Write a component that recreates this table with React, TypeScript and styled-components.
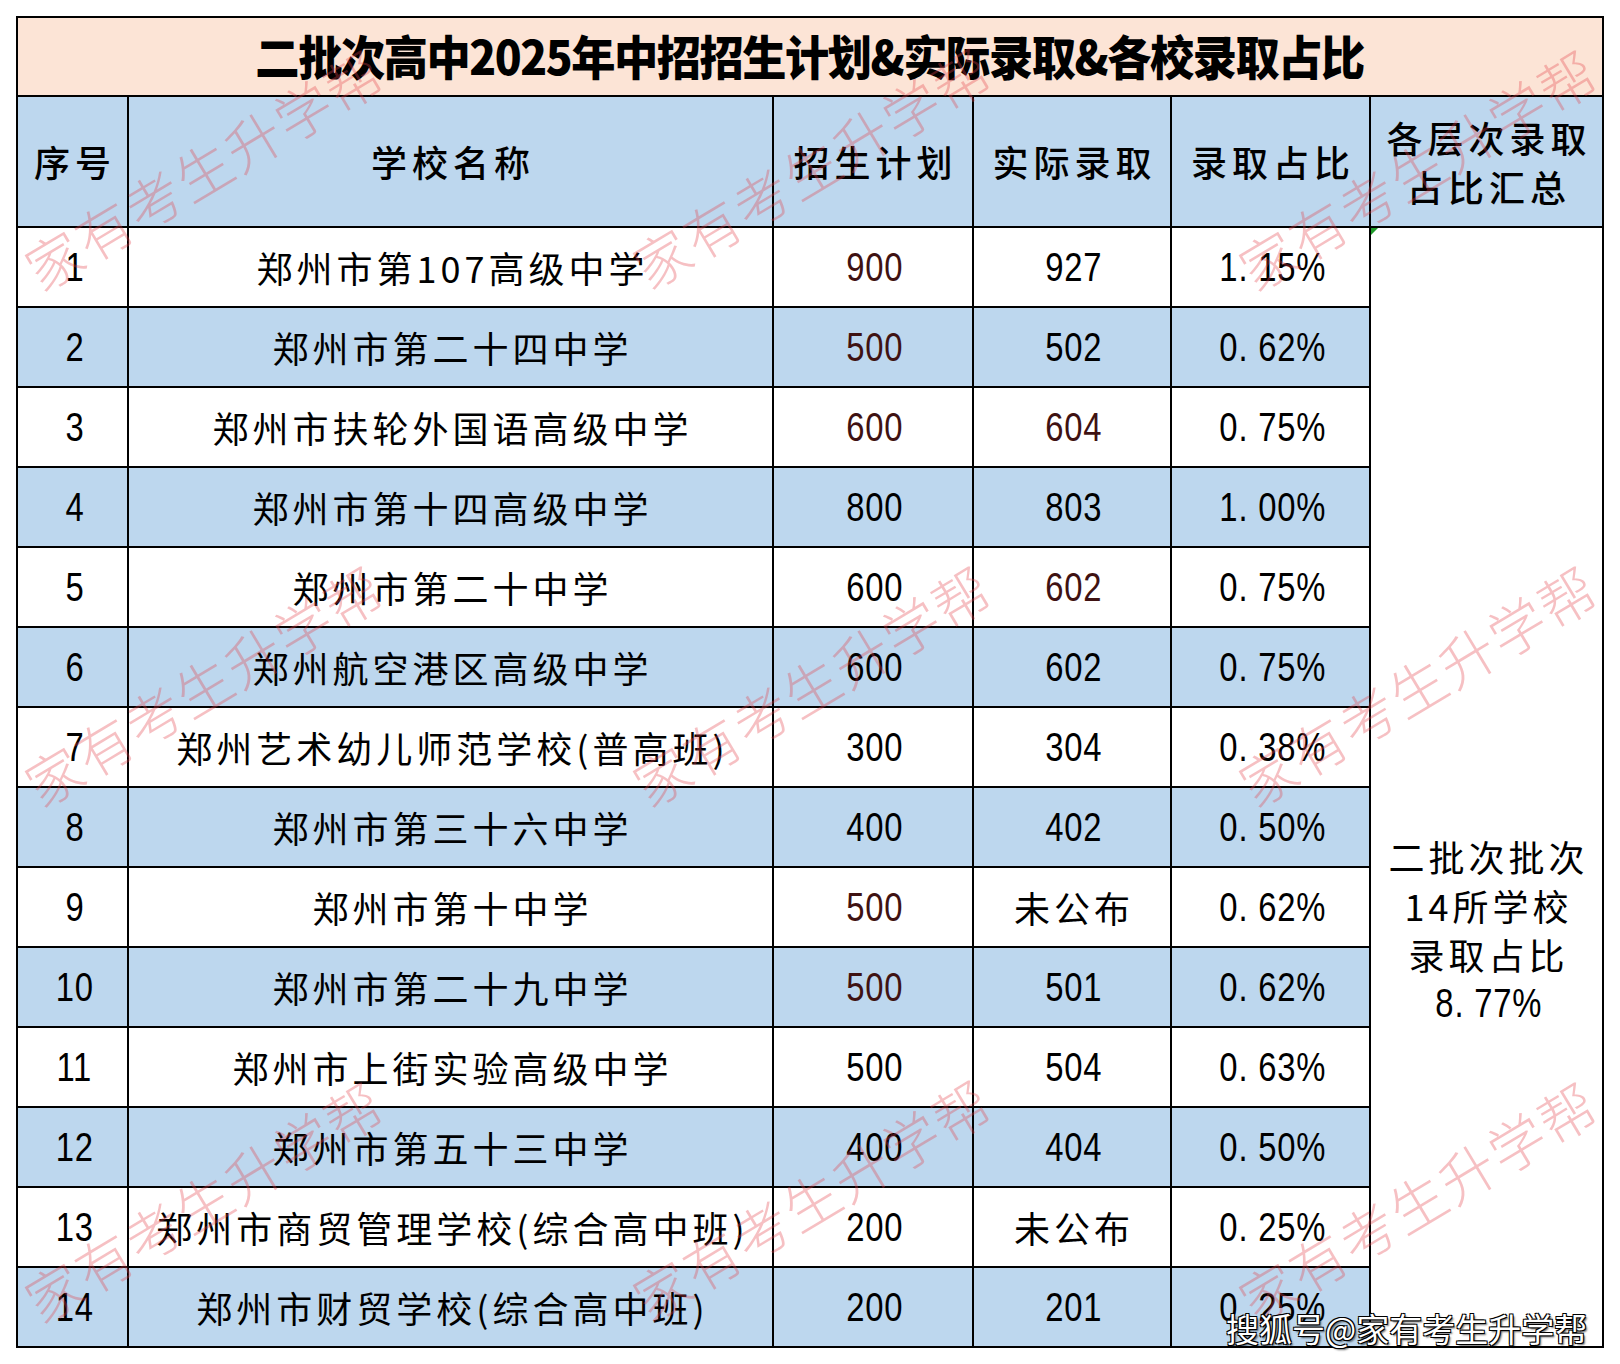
import React from "react";
import styled, { createGlobalStyle } from "styled-components";

const GlobalStyle = createGlobalStyle`
  html, body {
    margin: 0;
    padding: 0;
    background: #ffffff;
  }
  body {
    font-family: "Noto Sans CJK SC", "Noto Sans", sans-serif;
    color: #000;
  }
`;

const Page = styled.div`
  position: relative;
  width: 1620px;
  height: 1364px;
  padding: 16px 0 0 16px;
  box-sizing: border-box;
  overflow: hidden;
  background: #fff;
`;

const Sheet = styled.div`
  display: grid;
  grid-template-columns: 111px 645px 200px 198px 199px 233px;
  grid-template-rows: 79px 131px repeat(14, 80px);
  width: max-content;
  border-top: 2px solid #000;
  border-left: 2px solid #000;
`;

const CellBase = styled.div`
  box-sizing: border-box;
  border-right: 2px solid #000;
  border-bottom: 2px solid #000;
  display: flex;
  align-items: center;
  justify-content: center;
  text-align: center;
  white-space: nowrap;
`;

const TitleCell = styled(CellBase)`
  grid-column: 1 / -1;
  background: #fce4d6;
  padding-bottom: 4px;
`;

const TitleText = styled.span`
  display: inline-block;
  font-family: "Noto Sans CJK SC", sans-serif;
  font-weight: 900;
  font-size: 47px;
  letter-spacing: -1.5px;
  transform: scaleX(0.94);
`;

const HeadCell = styled(CellBase)`
  background: #bdd7ee;
  font-family: "Noto Sans CJK SC", sans-serif;
  font-weight: 500;
  font-size: 36px;
  letter-spacing: 5px;
  line-height: 49px;
  flex-direction: column;
  padding-left: 5px;
`;

const DataCell = styled(CellBase)<{ $alt: boolean; $brown?: boolean }>`
  background: ${(p) => (p.$alt ? "#bdd7ee" : "#ffffff")};
  color: ${(p) => (p.$brown ? "#3f1212" : "#000000")};
  font-family: "Noto Sans CJK SC", sans-serif;
  font-size: 36px;
  letter-spacing: 4px;
  padding-left: 4px;
`;

const Num = styled.span`
  display: inline-block;
  font-family: "Liberation Sans", "Arial", sans-serif;
  font-size: 41px;
  letter-spacing: 1px;
  transform: scaleX(0.8);
`;

const SummaryCell = styled(CellBase)`
  grid-column: 6;
  grid-row: 3 / span 14;
  background: #fff;
  position: relative;
  flex-direction: column;
  padding-top: 286px;
  font-family: "Noto Sans CJK SC", sans-serif;
  font-size: 36px;
  letter-spacing: 4px;
  line-height: 49px;
  padding-left: 4px;
`;

const CornerMark = styled.span`
  position: absolute;
  left: 0;
  top: 0;
  width: 0;
  height: 0;
  border-top: 7px solid #1f9b2a;
  border-right: 7px solid transparent;
`;

const Watermark = styled.div<{ $x: number; $y: number }>`
  position: absolute;
  left: ${(p) => p.$x}px;
  top: ${(p) => p.$y}px;
  transform: translate(-50%, -50%) rotate(-31deg);
  font-family: "Noto Sans CJK SC", sans-serif;
  font-weight: 300;
  font-size: 56px;
  letter-spacing: 2px;
  color: rgba(228, 64, 72, 0.33);
  white-space: nowrap;
  pointer-events: none;
`;

const Credit = styled.div`
  position: absolute;
  left: 1226px;
  top: 1304px;
  font-family: "Noto Sans CJK SC", sans-serif;
  font-size: 33px;
  color: #ffffff;
  white-space: nowrap;
  text-shadow: 1px 1px 0 #000, -1px -1px 0 #000, 1px -1px 0 #000, -1px 1px 0 #000,
    2px 2px 2px rgba(0, 0, 0, 0.6);
`;

type Row = {
  name: string;
  plan: string;
  planBrown?: boolean;
  actual: string;
  actualBrown?: boolean;
  ratio: string;
};

const rows: Row[] = [
  { name: "郑州市第107高级中学", plan: "900", planBrown: true, actual: "927", ratio: "1. 15%" },
  { name: "郑州市第二十四中学", plan: "500", planBrown: true, actual: "502", ratio: "0. 62%" },
  { name: "郑州市扶轮外国语高级中学", plan: "600", planBrown: true, actual: "604", actualBrown: true, ratio: "0. 75%" },
  { name: "郑州市第十四高级中学", plan: "800", actual: "803", ratio: "1. 00%" },
  { name: "郑州市第二十中学", plan: "600", actual: "602", actualBrown: true, ratio: "0. 75%" },
  { name: "郑州航空港区高级中学", plan: "600", actual: "602", ratio: "0. 75%" },
  { name: "郑州艺术幼儿师范学校(普高班)", plan: "300", actual: "304", ratio: "0. 38%" },
  { name: "郑州市第三十六中学", plan: "400", actual: "402", ratio: "0. 50%" },
  { name: "郑州市第十中学", plan: "500", planBrown: true, actual: "未公布", ratio: "0. 62%" },
  { name: "郑州市第二十九中学", plan: "500", planBrown: true, actual: "501", ratio: "0. 62%" },
  { name: "郑州市上街实验高级中学", plan: "500", actual: "504", ratio: "0. 63%" },
  { name: "郑州市第五十三中学", plan: "400", actual: "404", ratio: "0. 50%" },
  { name: "郑州市商贸管理学校(综合高中班)", plan: "200", actual: "未公布", ratio: "0. 25%" },
  { name: "郑州市财贸学校(综合高中班)", plan: "200", actual: "201", ratio: "0. 25%" },
];

const marks = [
  [203, 168], [811, 166], [1417, 168],
  [203, 684], [811, 684], [1417, 684],
  [203, 1200], [811, 1198], [1417, 1200],
];

const isNumeric = (s: string) => /^[0-9.% ]+$/.test(s);

export default function App() {
  return (
    <>
      <GlobalStyle />
      <Page>
        <Sheet>
          <TitleCell>
            <TitleText>二批次高中2025年中招招生计划&amp;实际录取&amp;各校录取占比</TitleText>
          </TitleCell>
          <HeadCell>序号</HeadCell>
          <HeadCell>学校名称</HeadCell>
          <HeadCell>招生计划</HeadCell>
          <HeadCell>实际录取</HeadCell>
          <HeadCell>录取占比</HeadCell>
          <HeadCell>
            <span>各层次录取</span>
            <span>占比汇总</span>
          </HeadCell>
          {rows.map((r, i) => {
            const alt = i % 2 === 1;
            return (
              <React.Fragment key={r.name}>
                <DataCell $alt={alt}>
                  <Num>{i + 1}</Num>
                </DataCell>
                <DataCell $alt={alt}>{r.name}</DataCell>
                <DataCell $alt={alt} $brown={r.planBrown}>
                  <Num>{r.plan}</Num>
                </DataCell>
                <DataCell $alt={alt} $brown={r.actualBrown}>
                  {isNumeric(r.actual) ? <Num>{r.actual}</Num> : r.actual}
                </DataCell>
                <DataCell $alt={alt}>
                  <Num>{r.ratio}</Num>
                </DataCell>
              </React.Fragment>
            );
          })}
          <SummaryCell>
            <CornerMark />
            <span>二批次批次</span>
            <span>14所学校</span>
            <span>录取占比</span>
            <Num>8. 77%</Num>
          </SummaryCell>
        </Sheet>
        {marks.map(([x, y]) => (
          <Watermark key={`${x}-${y}`} $x={x} $y={y}>
            家有考生升学帮
          </Watermark>
        ))}
        <Credit>搜狐号@家有考生升学帮</Credit>
      </Page>
    </>
  );
}
